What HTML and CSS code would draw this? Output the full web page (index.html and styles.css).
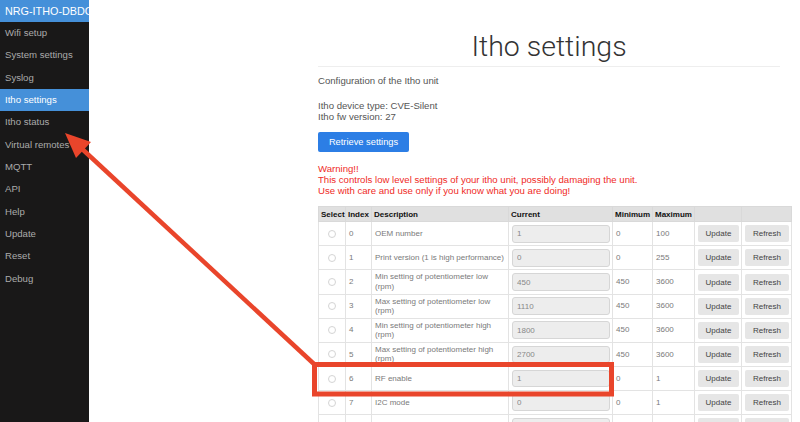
FILE: index.html
```html
<!DOCTYPE html>
<html>
<head>
<meta charset="utf-8">
<title>Itho settings</title>
<link rel="stylesheet" href="styles.css">
</head>
<body>
<div class="layout">
  <nav class="menu">
    <div class="heading">NRG-ITHO-DBDC</div>
    <ul class="menu-list">
      <li class="item">Wifi setup</li>
      <li class="item">System settings</li>
      <li class="item">Syslog</li>
      <li class="item selected">Itho settings</li>
      <li class="item">Itho status</li>
      <li class="item">Virtual remotes</li>
      <li class="item">MQTT</li>
      <li class="item">API</li>
      <li class="item">Help</li>
      <li class="item">Update</li>
      <li class="item">Reset</li>
      <li class="item">Debug</li>
    </ul>
  </nav>
  <main class="main">
    <div class="content">
      <div class="header"><h1 class="title">Itho settings</h1></div>
      <p class="intro">Configuration of the Itho unit</p>
      <p class="device">Itho device type: CVE-Silent<br>Itho fw version: 27</p>
      <button class="btn-primary">Retrieve settings</button>
      <p class="warning">Warning!!<br>This controls low level settings of your itho unit, possibly damaging the unit.<br>Use with care and use only if you know what you are doing!</p>
      <table class="settings">
        <colgroup>
          <col class="c-select"><col class="c-index"><col class="c-desc"><col class="c-cur"><col class="c-min"><col class="c-max"><col class="c-upd"><col class="c-ref">
        </colgroup>
        <thead>
          <tr><th>Select</th><th>Index</th><th>Description</th><th>Current</th><th>Minimum</th><th>Maximum</th><th></th><th></th></tr>
        </thead>
        <tbody>
          <tr><td class="sel"><input type="radio" class="radio" name="s"></td><td>0</td><td>OEM number</td><td><input class="field" value="1" readonly></td><td>0</td><td>100</td><td><button class="btn">Update</button></td><td><button class="btn">Refresh</button></td></tr>
          <tr><td class="sel"><input type="radio" class="radio" name="s"></td><td>1</td><td>Print version (1 is high performance)</td><td><input class="field" value="0" readonly></td><td>0</td><td>255</td><td><button class="btn">Update</button></td><td><button class="btn">Refresh</button></td></tr>
          <tr><td class="sel"><input type="radio" class="radio" name="s"></td><td>2</td><td>Min setting of potentiometer low (rpm)</td><td><input class="field" value="450" readonly></td><td>450</td><td>3600</td><td><button class="btn">Update</button></td><td><button class="btn">Refresh</button></td></tr>
          <tr><td class="sel"><input type="radio" class="radio" name="s"></td><td>3</td><td>Max setting of potentiometer low (rpm)</td><td><input class="field" value="1110" readonly></td><td>450</td><td>3600</td><td><button class="btn">Update</button></td><td><button class="btn">Refresh</button></td></tr>
          <tr><td class="sel"><input type="radio" class="radio" name="s"></td><td>4</td><td>Min setting of potentiometer high (rpm)</td><td><input class="field" value="1800" readonly></td><td>450</td><td>3600</td><td><button class="btn">Update</button></td><td><button class="btn">Refresh</button></td></tr>
          <tr><td class="sel"><input type="radio" class="radio" name="s"></td><td>5</td><td>Max setting of potentiometer high (rpm)</td><td><input class="field" value="2700" readonly></td><td>450</td><td>3600</td><td><button class="btn">Update</button></td><td><button class="btn">Refresh</button></td></tr>
          <tr><td class="sel"><input type="radio" class="radio" name="s"></td><td>6</td><td>RF enable</td><td><input class="field" value="1" readonly></td><td>0</td><td>1</td><td><button class="btn">Update</button></td><td><button class="btn">Refresh</button></td></tr>
          <tr><td class="sel"><input type="radio" class="radio" name="s"></td><td>7</td><td>I2C mode</td><td><input class="field" value="0" readonly></td><td>0</td><td>1</td><td><button class="btn">Update</button></td><td><button class="btn">Refresh</button></td></tr>
          <tr class="partial"><td class="sel"></td><td></td><td></td><td><input class="field" value="" readonly></td><td></td><td></td><td><button class="btn" aria-label="Update"></button></td><td><button class="btn" aria-label="Refresh"></button></td></tr>
        </tbody>
      </table>
    </div>
  </main>
</div>
<svg class="annotation" width="800" height="422" viewBox="0 0 800 422">
  <line x1="314" y1="364" x2="80" y2="147" stroke="#e9452b" stroke-width="4.5"/>
  <polygon points="65,133 91,142 76,158" fill="#e9452b"/>
  <rect x="314.5" y="364.5" width="297" height="29.5" fill="none" stroke="#e9452b" stroke-width="5"/>
</svg>
</body>
</html>
```

FILE: styles.css
```css
html, body {
  margin: 0;
  padding: 0;
  background: #fff;
}
body {
  font-family: "Liberation Sans", Arial, sans-serif;
  font-size: 9.6px;
  line-height: 11px;
  color: #555;
  overflow: hidden;
}
.layout {
  display: flex;
  min-height: 422px;
}
.menu {
  flex: 0 0 89px;
  width: 89px;
  background: #191818;
  overflow: hidden;
}
.heading {
  height: 22px;
  line-height: 22px;
  padding-left: 5px;
  background: #4590d9;
  color: #fff;
  font-size: 10.8px;
  white-space: nowrap;
  overflow: hidden;
}
.menu-list {
  list-style: none;
  margin: 0;
  padding: 0;
}
.item {
  height: 22.35px;
  line-height: 22.35px;
  padding-left: 5px;
  color: #ababab;
  white-space: nowrap;
}
.item.selected {
  background: #4590d9;
  color: #fff;
}
.main {
  flex: 1;
  min-width: 0;
}
.content {
  margin-left: 229px;
  width: 462px;
}
.header {
  padding-top: 30px;
  padding-bottom: 2px;
  border-bottom: 1px solid #eee;
  text-align: center;
}
.title {
  margin: 0;
  font-family: Roboto, "Liberation Sans", sans-serif;
  font-weight: 300;
  font-size: 28.5px;
  line-height: 34px;
  color: #333;
}
.intro {
  margin: 8px 0 0;
}
.device {
  margin: 13.5px 0 0;
}
.btn-primary {
  display: block;
  margin-top: 10.5px;
  width: 91px;
  height: 20px;
  padding: 0;
  border: none;
  border-radius: 2px;
  background: #2c7ee5;
  color: #fff;
  font-family: "Liberation Sans", Arial, sans-serif;
  font-size: 9.3px;
}
.warning {
  margin: 10.8px 0 0;
  color: #ef2b1f;
}
.settings {
  margin-top: 10.5px;
  border-collapse: collapse;
  table-layout: fixed;
  width: 473px;
  font-size: 8px;
  line-height: 9.6px;
  color: #7a7a7a;
  border: 1px solid #d9d9d9;
}
.c-select { width: 27px; }
.c-index { width: 26px; }
.c-desc { width: 137px; }
.c-cur { width: 104px; }
.c-min { width: 40px; }
.c-max { width: 42px; }
.c-upd { width: 47px; }
.c-ref { width: 50px; }
.settings th {
  height: 14px;
  padding: 0 2px;
  background: #e0e0e0;
  color: #111;
  font-weight: bold;
  text-align: left;
  border: 1px solid #d9d9d9;
  white-space: nowrap;
}
.settings td {
  height: 23.1px;
  padding: 0 2px 0 3px;
  border: 1px solid #e3e3e3;
  vertical-align: middle;
}
.settings td.sel {
  text-align: center;
  padding: 0;
}
.radio {
  appearance: none;
  -webkit-appearance: none;
  display: inline-block;
  vertical-align: middle;
  width: 8px;
  height: 8px;
  margin: 0;
  border: 1px solid #d4d4d4;
  border-radius: 50%;
  background: #fff;
}
.field {
  display: block;
  box-sizing: border-box;
  width: 98px;
  height: 17.5px;
  padding: 0 4px;
  border: 1px solid #d6d6d6;
  border-radius: 3px;
  background: #ededed;
  color: #888;
  font-family: "Liberation Sans", Arial, sans-serif;
  font-size: 8px;
  outline: none;
}
.btn {
  display: block;
  height: 17px;
  width: 100%;
  padding: 0;
  border: none;
  border-radius: 2px;
  background: #e6e6e6;
  color: #444;
  font-family: "Liberation Sans", Arial, sans-serif;
  font-size: 8px;
}
.annotation {
  position: absolute;
  left: 0;
  top: 0;
  pointer-events: none;
}
```
